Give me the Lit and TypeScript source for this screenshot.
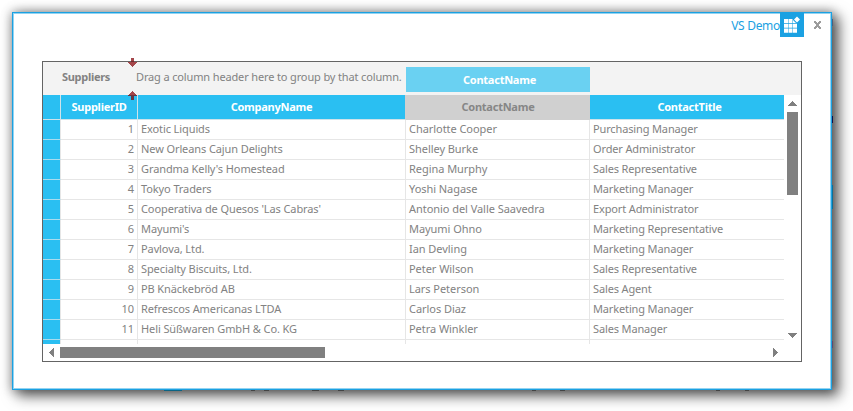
import { LitElement, html, css, svg } from "lit";
import { customElement } from "lit/decorators.js";

interface Supplier {
  id: number;
  company: string;
  contact: string;
  title: string;
}

const suppliers: Supplier[] = [
  { id: 1, company: "Exotic Liquids", contact: "Charlotte Cooper", title: "Purchasing Manager" },
  { id: 2, company: "New Orleans Cajun Delights", contact: "Shelley Burke", title: "Order Administrator" },
  { id: 3, company: "Grandma Kelly's Homestead", contact: "Regina Murphy", title: "Sales Representative" },
  { id: 4, company: "Tokyo Traders", contact: "Yoshi Nagase", title: "Marketing Manager" },
  { id: 5, company: "Cooperativa de Quesos 'Las Cabras'", contact: "Antonio del Valle Saavedra", title: "Export Administrator" },
  { id: 6, company: "Mayumi's", contact: "Mayumi Ohno", title: "Marketing Representative" },
  { id: 7, company: "Pavlova, Ltd.", contact: "Ian Devling", title: "Marketing Manager" },
  { id: 8, company: "Specialty Biscuits, Ltd.", contact: "Peter Wilson", title: "Sales Representative" },
  { id: 9, company: "PB Knäckebröd AB", contact: "Lars Peterson", title: "Sales Agent" },
  { id: 10, company: "Refrescos Americanas LTDA", contact: "Carlos Diaz", title: "Marketing Manager" },
  { id: 11, company: "Heli Süßwaren GmbH & Co. KG", contact: "Petra Winkler", title: "Sales Manager" },
];

const arrow = (d: string, w: number, h: number) => svg`
  <svg width=${w} height=${h} viewBox="0 0 ${w} ${h}"><path d=${d} fill="#808080" /></svg>`;

@customElement("supplier-grid")
export class SupplierGrid extends LitElement {
  static styles = css`
    :host {
      display: flex;
      flex-direction: column;
      box-sizing: border-box;
      position: relative;
      width: 760px;
      height: 301px;
      border: 1px solid #646464;
      background: #fff;
      color: #828282;
      letter-spacing: -0.05px;
    }
    svg { display: block; }
    .group-panel {
      display: flex;
      height: 33px;
      flex: none;
      background: #f3f3f3;
      line-height: 30px;
      white-space: nowrap;
    }
    .caption {
      width: 93px;
      padding-left: 19px;
      box-sizing: border-box;
      font-weight: 700;
      letter-spacing: -0.3px;
    }
    .hint { width: 270px; letter-spacing: -0.14px; }
    .chip {
      box-sizing: border-box;
      width: 184px;
      height: 25px;
      margin-top: 5px;
      padding-left: 3px;
      background: #6ad1f2;
      color: #fff;
      font-weight: 700;
      letter-spacing: -0.25px;
      line-height: 25px;
      text-align: center;
    }
    .body { display: flex; height: 249px; flex: none; }
    .table { width: 741px; height: 249px; overflow: hidden; }
    .row {
      display: grid;
      grid-template-columns: 18px 77px 268px 184px 194px;
      height: 20px;
    }
    .row > div {
      box-sizing: border-box;
      border-right: 1px solid #e6e6e6;
      border-bottom: 1px solid #e6e6e6;
      padding-left: 3px;
      line-height: 17px;
      white-space: nowrap;
    }
    .row > div:last-child { border-right: 0; }
    .row > .marker { background: #2abff2; border-bottom-color: #a9dcee; }
    .row > .id { text-align: right; padding: 0 3px 0 0; }
    .row > .company { letter-spacing: -0.1px; }
    .row > .title { letter-spacing: -0.14px; }
    .row.head { height: 25px; }
    .row.head > div {
      padding: 0;
      background: #2abff2;
      color: #fff;
      font-weight: 700;
      letter-spacing: -0.25px;
      line-height: 24px;
      text-align: center;
      border-color: #cfe3ea;
    }
    .row.head > .company { border-right-color: #d0d0d0; }
    .row.head > .dragged { padding-left: 1px; background: #d0d0d0; color: #868686; border-color: #d0d0d0; }
    .row.head > .last { padding-left: 5px; }
    .vscroll { display: flex; flex-direction: column; align-items: center; width: 17px; }
    .vscroll .up { margin-top: 6px; }
    .vthumb { width: 11px; height: 83px; margin-top: 6px; background: #808080; }
    .vscroll .down { margin-top: 138px; }
    .hscroll { display: flex; align-items: center; height: 17px; width: 741px; }
    .hscroll .left { margin-left: 6px; }
    .hthumb { width: 265px; height: 11px; margin-left: 6px; background: #808080; }
    .hscroll .right { margin-left: 448px; }
    .drop { position: absolute; left: 85px; }
    .drop.top { top: -4px; }
    .drop.bottom { top: 29px; }
  `;

  render() {
    return html`
      <div class="group-panel">
        <div class="caption">Suppliers</div>
        <div class="hint">Drag a column header here to group by that column.</div>
        <div class="chip">ContactName</div>
      </div>
      <div class="body">
        <div class="table">
          <div class="row head">
            <div></div>
            <div>SupplierID</div>
            <div class="company">CompanyName</div>
            <div class="dragged">ContactName</div>
            <div class="last">ContactTitle</div>
          </div>
          ${suppliers.map(
            (s) => html`<div class="row">
              <div class="marker"></div>
              <div class="id">${s.id}</div>
              <div class="company">${s.company}</div>
              <div>${s.contact}</div>
              <div class="title">${s.title}</div>
            </div>`
          )}
          <div class="row"><div class="marker"></div><div></div><div></div><div></div><div></div></div>
        </div>
        <div class="vscroll">
          <div class="up">${arrow("M4 0h1v1h1v1h1v1h1v1h1v1H0V4h1V3h1V2h1V1h1z", 9, 5)}</div>
          <div class="vthumb"></div>
          <div class="down">${arrow("M0 0h9v1H8v1H7v1H6v1H5v1H4V4H3V3H2V2H1V1H0z", 9, 5)}</div>
        </div>
      </div>
      <div class="hscroll">
        <div class="left">${arrow("M5 0v9H4V8H3V7H2V6H1V5H0V4h1V3h1V2h1V1h1V0z", 5, 9)}</div>
        <div class="hthumb"></div>
        <div class="right">${arrow("M0 0h1v1h1v1h1v1h1v1h1v1H4v1H3v1H2v1H1v1H0z", 5, 9)}</div>
      </div>
      <svg class="drop top" width="9" height="9" viewBox="0 0 9 9">
        <path d="M3 0h3v4h3v1H8v1H7v1H6v1H5v1H4V8H3V7H2V6H1V5H0V4h3z" fill="#a4464a" />
        <path d="M3 3h3v1H3z" fill="#6e2a2e" />
      </svg>
      <svg class="drop bottom" width="9" height="9" viewBox="0 0 9 9">
        <path d="M4 0h1v1h1v1h1v1h1v1h1v1H6v4H3V5H0V4h1V3h1V2h1V1h1z" fill="#a4464a" />
        <path d="M0 4h9v1H6v4H3V5H0z" fill="#6b3440" />
      </svg>
    `;
  }
}

@customElement("app-root")
export class AppRoot extends LitElement {
  static styles = css`
    :host {
      display: block;
      box-sizing: border-box;
      width: 853px;
      height: 411px;
      padding: 12px 0 0 12px;
      overflow: hidden;
      background: #fff;
      font: 11px/15px "Noto Sans", "Open Sans", sans-serif;
    }
    .window {
      position: relative;
      box-sizing: border-box;
      width: 820px;
      height: 378px;
      border: 1px solid #1ba1e2;
      background: #fff;
      box-shadow: inset 0 0 0 1px #93d3f1, 6px 5px 13px 1px rgba(0, 0, 0, 0.6), 0 0 10px 1px rgba(0, 0, 0, 0.3);
    }
    /* Slivers of the page behind the window, along its right and bottom edges. */
    .window::before {
      content: "";
      position: absolute;
      top: 0;
      right: -2px;
      width: 1px;
      height: 376px;
      background: linear-gradient(
        #0000 0 6px, #4a5f7d 6px 13px, #0000 13px 103px, #101048 103px 110px,
        #0000 110px 172px, #0b6f98 172px 196px, #0000 196px 328px, #5f4870 328px 335px, #0000 335px
      );
    }
    .window::after {
      content: "";
      position: absolute;
      left: 0;
      bottom: -2px;
      width: 818px;
      height: 1px;
      background: linear-gradient(
        90deg, #0000 0 151px, #0b6484 151px 169px, #0000 169px 238px, #444 238px 242px,
        #0000 242px 251px, #444 251px 256px, #0000 256px 299px, #444 299px 306px, #0000 306px 325px,
        #444 325px 331px, #0000 331px 519px, #444 519px 523px, #0000 523px 547px, #444 547px 552px,
        #0000 552px 703px, #444 703px 707px, #0000 707px 732px, #444 732px 736px, #0000 736px
      );
    }
    .titlebar { display: flex; justify-content: flex-end; height: 24px; }
    .title { color: #1ba1e2; font-size: 12px; letter-spacing: -0.3px; line-height: 26px; }
    .logo { display: block; margin-right: 10px; }
    .close { display: block; margin: 8px 10px 0 0; }
    supplier-grid { margin: 24px 0 0 29px; }
  `;

  render() {
    return html`
      <div class="window">
        <div class="titlebar">
          <div class="title">VS Demo</div>
          <svg class="logo" width="24" height="24" viewBox="0 0 24 24">
            <rect width="24" height="24" fill="#1ba1e2" />
            <path d="M4 6h4v4H4zM8.5 6h4v4h-4zM13 7l3 3h-3zM4 10.7h4v4H4zM8.5 10.7h4v4h-4zM13 10.7h4v4h-4zM4 15.4h4v4.3H4zM8.5 15.4h4v4.3h-4zM13 15.4h4v4.3h-4zM17 3.5l3 3-3 3-3-3z" fill="#fff" />
          </svg>
          <svg class="close" width="7" height="8" viewBox="0 0 7 8">
            <path d="M0 0h2v1h1v1h1V1h1V0h2v2H6v1H5v2h1v1h1v2H5V7H4V6H3v1H2v1H0V6h1V5h1V3H1V2H0z" fill="#9c9c9c" />
          </svg>
        </div>
        <supplier-grid></supplier-grid>
      </div>
    `;
  }
}
